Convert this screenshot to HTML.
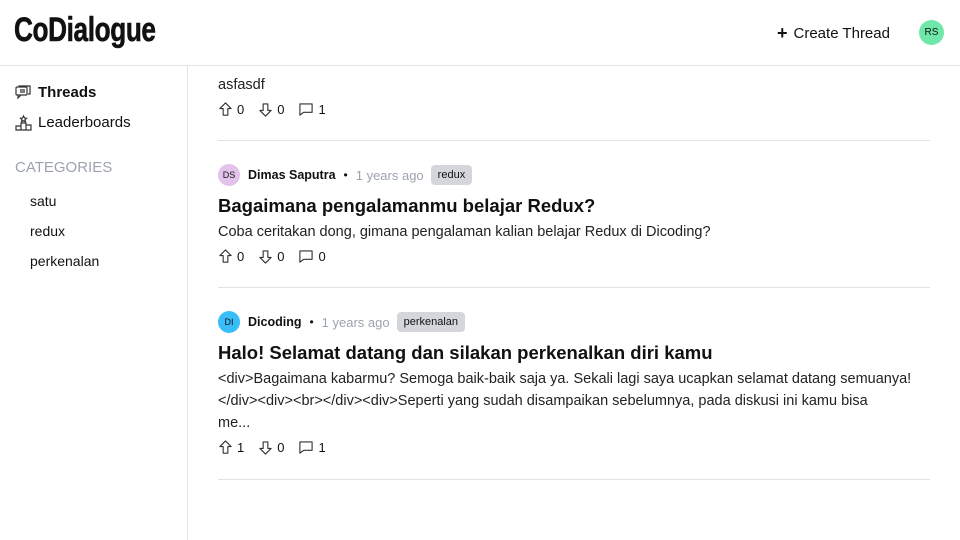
<!DOCTYPE html>
<html><head><style>
*{margin:0;padding:0;box-sizing:border-box}
body{width:960px;height:540px;overflow:hidden;background:#fff;font-family:"Liberation Sans","DejaVu Sans",sans-serif;color:#111;position:relative}
.hdr{position:absolute;left:0;top:0;width:960px;height:66px;border-bottom:1px solid #e3e3e3}
.logo{position:absolute;left:14px;top:11px;font-weight:bold;font-size:34px;letter-spacing:-0.5px;-webkit-text-stroke:0.6px #111;transform:scaleX(0.77);transform-origin:left;white-space:nowrap}
.ct{position:absolute;left:777px;top:22px;font-size:15px}
.av{position:absolute;left:919px;top:20px;width:25px;height:25px;border-radius:50%;background:#6ee7a8;font-size:10px;text-align:center;line-height:25px}
.side{position:absolute;left:0;top:66px;width:188px;height:474px;border-right:1px solid #e3e3e3}
.nav{position:absolute;left:15px;font-size:15px;display:flex;align-items:center;gap:6px}
.cat{position:absolute;left:15px;top:93px;color:#9ca3af;font-size:15px}
.ci{position:absolute;left:30px;font-size:14px}
.t{position:absolute;left:218px;width:712px}
.meta{display:flex;align-items:center;font-size:13px;height:22px}
.ua{width:22px;height:22px;border-radius:50%;font-size:9px;text-align:center;line-height:22px;margin-right:8px}
.dot{margin:0 8px;font-size:12px}
.ago{color:#9ca3af}
.tag{background:#d4d6db;border-radius:4px;font-size:11px;padding:4px 7px;margin-left:7px}
h2{font-size:18.5px;font-weight:bold;margin-top:9px}
.body{font-size:14.5px;line-height:22px;margin-top:4px;color:#222;white-space:nowrap}
.acts{display:flex;align-items:center;font-size:13px;height:20px;margin-top:3px}
.acts span{margin-right:14px;margin-left:4px}
.hr{position:absolute;left:218px;width:712px;border-top:1px solid #e3e3e3}
</style></head><body>
<div class="hdr">
<div class="logo">CoDialogue</div>
<div class="ct"><b style="font-size:18px;margin-right:6px;position:relative;top:1px">+</b>Create Thread</div>
<div class="av">RS</div>
</div>
<div class="side">
<div class="nav" style="top:18px"><svg width="17" height="16" viewBox="0 0 17 16" fill="none" stroke="#333" stroke-width="1.2"><rect x="1" y="2" width="11" height="8" rx="1"/><path d="M3 10v3l3-3M5 5h5M5 7h5M4 2V1h11v8h-2"/></svg><b>Threads</b></div>
<div class="nav" style="top:48px"><svg width="17" height="17" viewBox="0 0 17 17" fill="none" stroke="#333" stroke-width="1.2"><path d="M6 9h5v7H6zM1 12h5v4H1zM11 11h5v5h-5zM8.5 2l1 2 2 .3-1.5 1.4.4 2-1.9-1-1.9 1 .4-2L5.5 4.3 7.5 4z"/></svg>Leaderboards</div>
<div class="cat">CATEGORIES</div>
<div class="ci" style="top:127px">satu</div>
<div class="ci" style="top:157px">redux</div>
<div class="ci" style="top:187px">perkenalan</div>
</div>

<svg width="0" height="0" style="position:absolute"><defs>
<symbol id="up" viewBox="0 0 16 16"><path d="M8 1L2 7h3.5v7h5V7H14z" fill="none" stroke="#333" stroke-width="1.2" stroke-linejoin="round"/></symbol>
<symbol id="dn" viewBox="0 0 16 16"><path d="M8 15L2 9h3.5V2h5v7H14z" fill="none" stroke="#333" stroke-width="1.2" stroke-linejoin="round"/></symbol>
<symbol id="cm" viewBox="0 0 16 16"><path d="M1.5 2h13v9h-9l-4 3z" fill="none" stroke="#333" stroke-width="1.2" stroke-linejoin="round"/></symbol>
</defs></svg>

<div class="t" style="top:74px">
<div class="body" style="margin-top:0">asfasdf</div>
<div class="acts"><svg width="15" height="15"><use href="#up"/></svg><span>0</span><svg width="15" height="15"><use href="#dn"/></svg><span>0</span><svg width="16" height="15"><use href="#cm"/></svg><span>1</span></div>
</div>
<div class="hr" style="top:140px"></div>

<div class="t" style="top:164px">
<div class="meta"><div class="ua" style="background:#e3c2ec">DS</div><b style="font-size:12.5px">Dimas Saputra</b><span class="dot">•</span><span class="ago">1 years ago</span><span class="tag">redux</span></div>
<h2>Bagaimana pengalamanmu belajar Redux?</h2>
<div class="body">Coba ceritakan dong, gimana pengalaman kalian belajar Redux di Dicoding?</div>
<div class="acts"><svg width="15" height="15"><use href="#up"/></svg><span>0</span><svg width="15" height="15"><use href="#dn"/></svg><span>0</span><svg width="16" height="15"><use href="#cm"/></svg><span>0</span></div>
</div>
<div class="hr" style="top:287px"></div>

<div class="t" style="top:311px">
<div class="meta"><div class="ua" style="background:#38bdf8">DI</div><b style="font-size:12.5px">Dicoding</b><span class="dot">•</span><span class="ago">1 years ago</span><span class="tag">perkenalan</span></div>
<h2>Halo! Selamat datang dan silakan perkenalkan diri kamu</h2>
<div class="body">&lt;div&gt;Bagaimana kabarmu? Semoga baik-baik saja ya. Sekali lagi saya ucapkan selamat datang semuanya!<br>&lt;/div&gt;&lt;div&gt;&lt;br&gt;&lt;/div&gt;&lt;div&gt;Seperti yang sudah disampaikan sebelumnya, pada diskusi ini kamu bisa<br>me...</div>
<div class="acts"><svg width="15" height="15"><use href="#up"/></svg><span>1</span><svg width="15" height="15"><use href="#dn"/></svg><span>0</span><svg width="16" height="15"><use href="#cm"/></svg><span>1</span></div>
</div>
<div class="hr" style="top:479px"></div>
</body></html>
